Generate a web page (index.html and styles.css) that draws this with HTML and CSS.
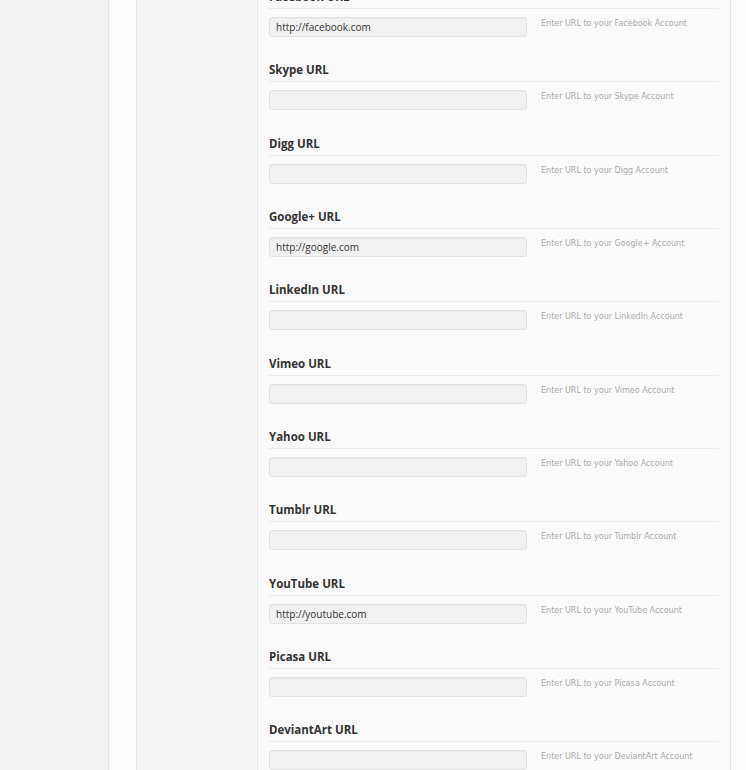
FILE: index.html
```html
<!DOCTYPE html>
<html lang="en">
<head>
  <meta charset="UTF-8">
  <title>Theme Options: Social</title>
  <link rel="stylesheet" href="styles.css">
</head>
<body>

  <div class="admin-menu"></div>

  <div class="wrap">
    <div class="options-panel">
      <div class="options-nav"></div>

      <div class="options-content">
        <div class="option-row">
          <h3>Facebook URL</h3>
          <div class="option-field">
            <input type="text" value="http://facebook.com">
            <span class="desc">Enter URL to your Facebook Account</span>
          </div>
        </div>

        <div class="option-row">
          <h3>Skype URL</h3>
          <div class="option-field">
            <input type="text" value="">
            <span class="desc">Enter URL to your Skype Account</span>
          </div>
        </div>

        <div class="option-row">
          <h3>Digg URL</h3>
          <div class="option-field">
            <input type="text" value="">
            <span class="desc">Enter URL to your Digg Account</span>
          </div>
        </div>

        <div class="option-row">
          <h3>Google+ URL</h3>
          <div class="option-field">
            <input type="text" value="http://google.com">
            <span class="desc">Enter URL to your Google+ Account</span>
          </div>
        </div>

        <div class="option-row">
          <h3>LinkedIn URL</h3>
          <div class="option-field">
            <input type="text" value="">
            <span class="desc">Enter URL to your LinkedIn Account</span>
          </div>
        </div>

        <div class="option-row">
          <h3>Vimeo URL</h3>
          <div class="option-field">
            <input type="text" value="">
            <span class="desc">Enter URL to your Vimeo Account</span>
          </div>
        </div>

        <div class="option-row">
          <h3>Yahoo URL</h3>
          <div class="option-field">
            <input type="text" value="">
            <span class="desc">Enter URL to your Yahoo Account</span>
          </div>
        </div>

        <div class="option-row">
          <h3>Tumblr URL</h3>
          <div class="option-field">
            <input type="text" value="">
            <span class="desc">Enter URL to your Tumblr Account</span>
          </div>
        </div>

        <div class="option-row">
          <h3>YouTube URL</h3>
          <div class="option-field">
            <input type="text" value="http://youtube.com">
            <span class="desc">Enter URL to your YouTube Account</span>
          </div>
        </div>

        <div class="option-row">
          <h3>Picasa URL</h3>
          <div class="option-field">
            <input type="text" value="">
            <span class="desc">Enter URL to your Picasa Account</span>
          </div>
        </div>

        <div class="option-row">
          <h3>DeviantArt URL</h3>
          <div class="option-field">
            <input type="text" value="">
            <span class="desc">Enter URL to your DeviantArt Account</span>
          </div>
        </div>
      </div>
    </div>
  </div>

</body>
</html>
```

FILE: styles.css
```css
html, body {
  margin: 0;
  height: 100%;
  overflow: hidden;
}

body {
  display: flex;
  background: #fdfdfd;
  font-family: "Open Sans", "DejaVu Sans", sans-serif;
  color: #333;
}

.admin-menu {
  width: 108px;
  flex-shrink: 0;
  background: #f1f1f1;
  border-right: 1px solid #e4e4e4;
  box-shadow: 1px 0 1px rgba(0,0,0,0.04);
}

.wrap {
  padding-left: 27px;
  width: 595px;
}

.options-panel {
  display: flex;
  height: 100%;
  border-left: 1px solid #e6e6e6;
  border-right: 1px solid #e6e6e6;
}

.options-nav {
  width: 120px;
  flex-shrink: 0;
  background: #f3f3f3;
  border-right: 1px solid #e8e8e8;
}

.options-content {
  flex: 1;
  background: #fafafa;
  padding: 0 11px;
}

.option-row {
  padding-bottom: 24.33px;
}

.option-row:first-child {
  margin-top: -12px;
}

.option-row h3 {
  margin: 0;
  font-size: 11.5px;
  font-weight: bold;
  line-height: 14px;
  padding: 2px 0 4px;
  border-bottom: 1px solid #ececec;
  color: #333;
}

.option-field {
  display: flex;
  align-items: flex-start;
  margin-top: 8px;
}

.option-field input {
  width: 258px;
  height: 20px;
  box-sizing: border-box;
  margin: 0;
  padding: 0 6px;
  border: 1px solid #e2e2e2;
  border-radius: 3px;
  background: #f1f1f1;
  box-shadow: inset 0 1px 1px rgba(0,0,0,0.03);
  font-family: "Open Sans", "DejaVu Sans", sans-serif;
  font-size: 10px;
  color: #333;
  outline: none;
}

.desc {
  margin-left: 14px;
  font-family: "DejaVu Sans", sans-serif;
  font-size: 8px;
  line-height: 13px;
  color: #aaa;
}
```
